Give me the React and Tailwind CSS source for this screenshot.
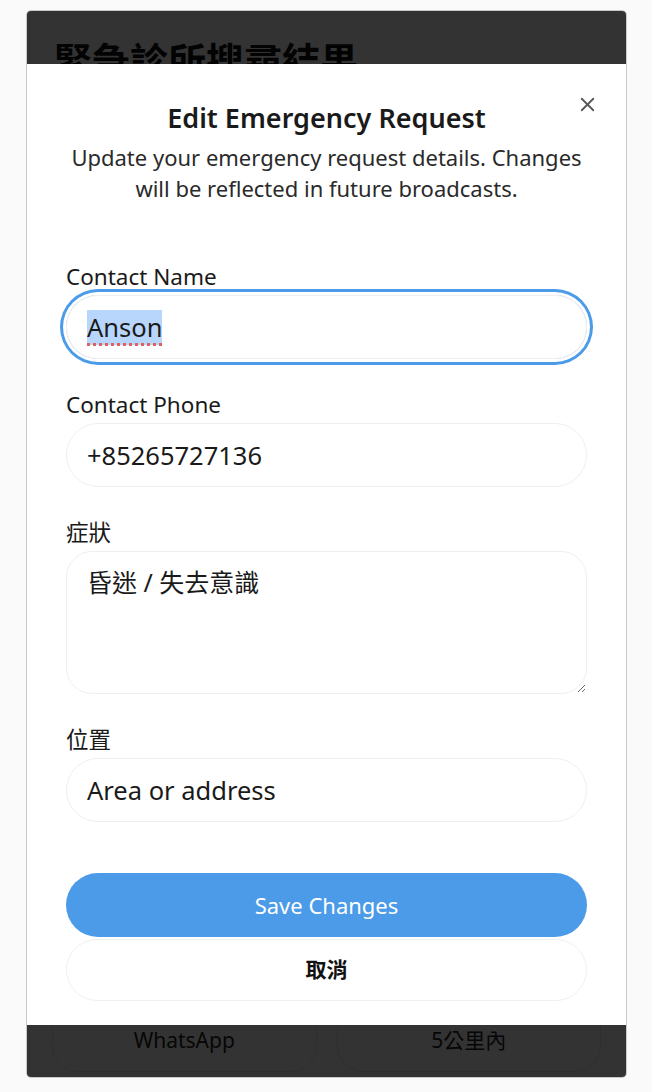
import { X } from 'lucide-react';

const font = { fontFamily: '"Noto Sans", "Noto Sans CJK TC", sans-serif' };

function Field({ label, children }) {
    return (
        <div className="flex flex-col">
            <label className="text-[22.5px] leading-[28px] text-[#1a1a1a]">{label}</label>
            <div className="mt-[4px]">{children}</div>
        </div>
    );
}

export default function App() {
    return (
        <div className="w-[652px] h-[1092px] bg-[#fafafa] pt-[10px] pl-[26px]" style={font}>
            <div className="relative w-[601px] h-[1068px] rounded-[5px] border border-[#c9c9c9] bg-white overflow-hidden">
                {/* page behind the dialog */}
                <div className="flex flex-col justify-between h-full">
                    <h1 className="pl-[27px] pt-[24px] text-[38px] leading-[50px] font-bold text-[#111]">緊急診所搜尋結果</h1>
                    <div className="grid grid-cols-2 gap-[20px] px-[25px] pb-[5px]">
                        <div className="h-[110px] rounded-[26px] border border-[#e6e6e6] flex items-end justify-center pb-[15px] text-[21px] text-[#222]">WhatsApp</div>
                        <div className="h-[110px] rounded-[26px] border border-[#e6e6e6] flex items-end justify-center pb-[15px] text-[21px] text-[#222]">5公里內</div>
                    </div>
                </div>

                {/* overlay */}
                <div className="absolute inset-0 bg-black/80"></div>

                {/* dialog */}
                <div className="absolute left-0 right-0 top-[53px] bottom-[52px] bg-white px-[39px] pt-[38px]">
                    <button className="absolute right-[27px] top-[29px] text-[#555]">
                        <X size={23} strokeWidth={1.9} />
                    </button>
                    <h2 className="text-center text-[27px] leading-[32px] font-semibold text-[#1a1a1a]">Edit Emergency Request</h2>
                    <p className="mt-[8px] -mx-[12px] text-center text-[22px] leading-[31px] text-[#2a2a2a]">
                        Update your emergency request details. Changes will be reflected in future broadcasts.
                    </p>

                    <div className="mt-[59px] flex flex-col gap-[32px]">
                        <Field label="Contact Name">
                            <div className="h-[64px] rounded-full border border-[#efefef] ring-[3px] ring-[#4b9be9] ring-offset-[3px] flex items-center pl-[20px] text-[25.5px] text-[#1a1a1a]">
                                <span className="bg-[#b8d6fb] leading-[35px] underline decoration-dotted decoration-[#e06060] decoration-[3px] underline-offset-[6px]">Anson</span>
                            </div>
                        </Field>
                        <Field label="Contact Phone">
                            <input
                                readOnly
                                value="+85265727136"
                                className="w-full h-[64px] rounded-full border border-[#efefef] pl-[20px] text-[25.5px] text-[#1a1a1a] outline-none"
                            />
                        </Field>
                        <Field label="症狀">
                            <textarea
                                readOnly
                                value="昏迷 / 失去意識"
                                className="block w-full h-[143px] rounded-[26px] border border-[#efefef] pl-[20px] pt-[14px] text-[25px] leading-[33px] text-[#1a1a1a] outline-none"
                            />
                        </Field>
                        <Field label="位置">
                            <input
                                readOnly
                                value="Area or address"
                                className="w-full h-[64px] rounded-full border border-[#efefef] pl-[20px] text-[25.5px] text-[#1a1a1a] outline-none"
                            />
                        </Field>
                    </div>

                    <div className="mt-[51px] flex flex-col gap-[2px]">
                        <button className="h-[64px] rounded-full bg-[#4b9be9] text-white text-[22px]">Save Changes</button>
                        <button className="h-[62px] rounded-full border border-[#f0f0f0] bg-white text-[#111] text-[21px] font-semibold">取消</button>
                    </div>
                </div>
            </div>
        </div>
    );
}
